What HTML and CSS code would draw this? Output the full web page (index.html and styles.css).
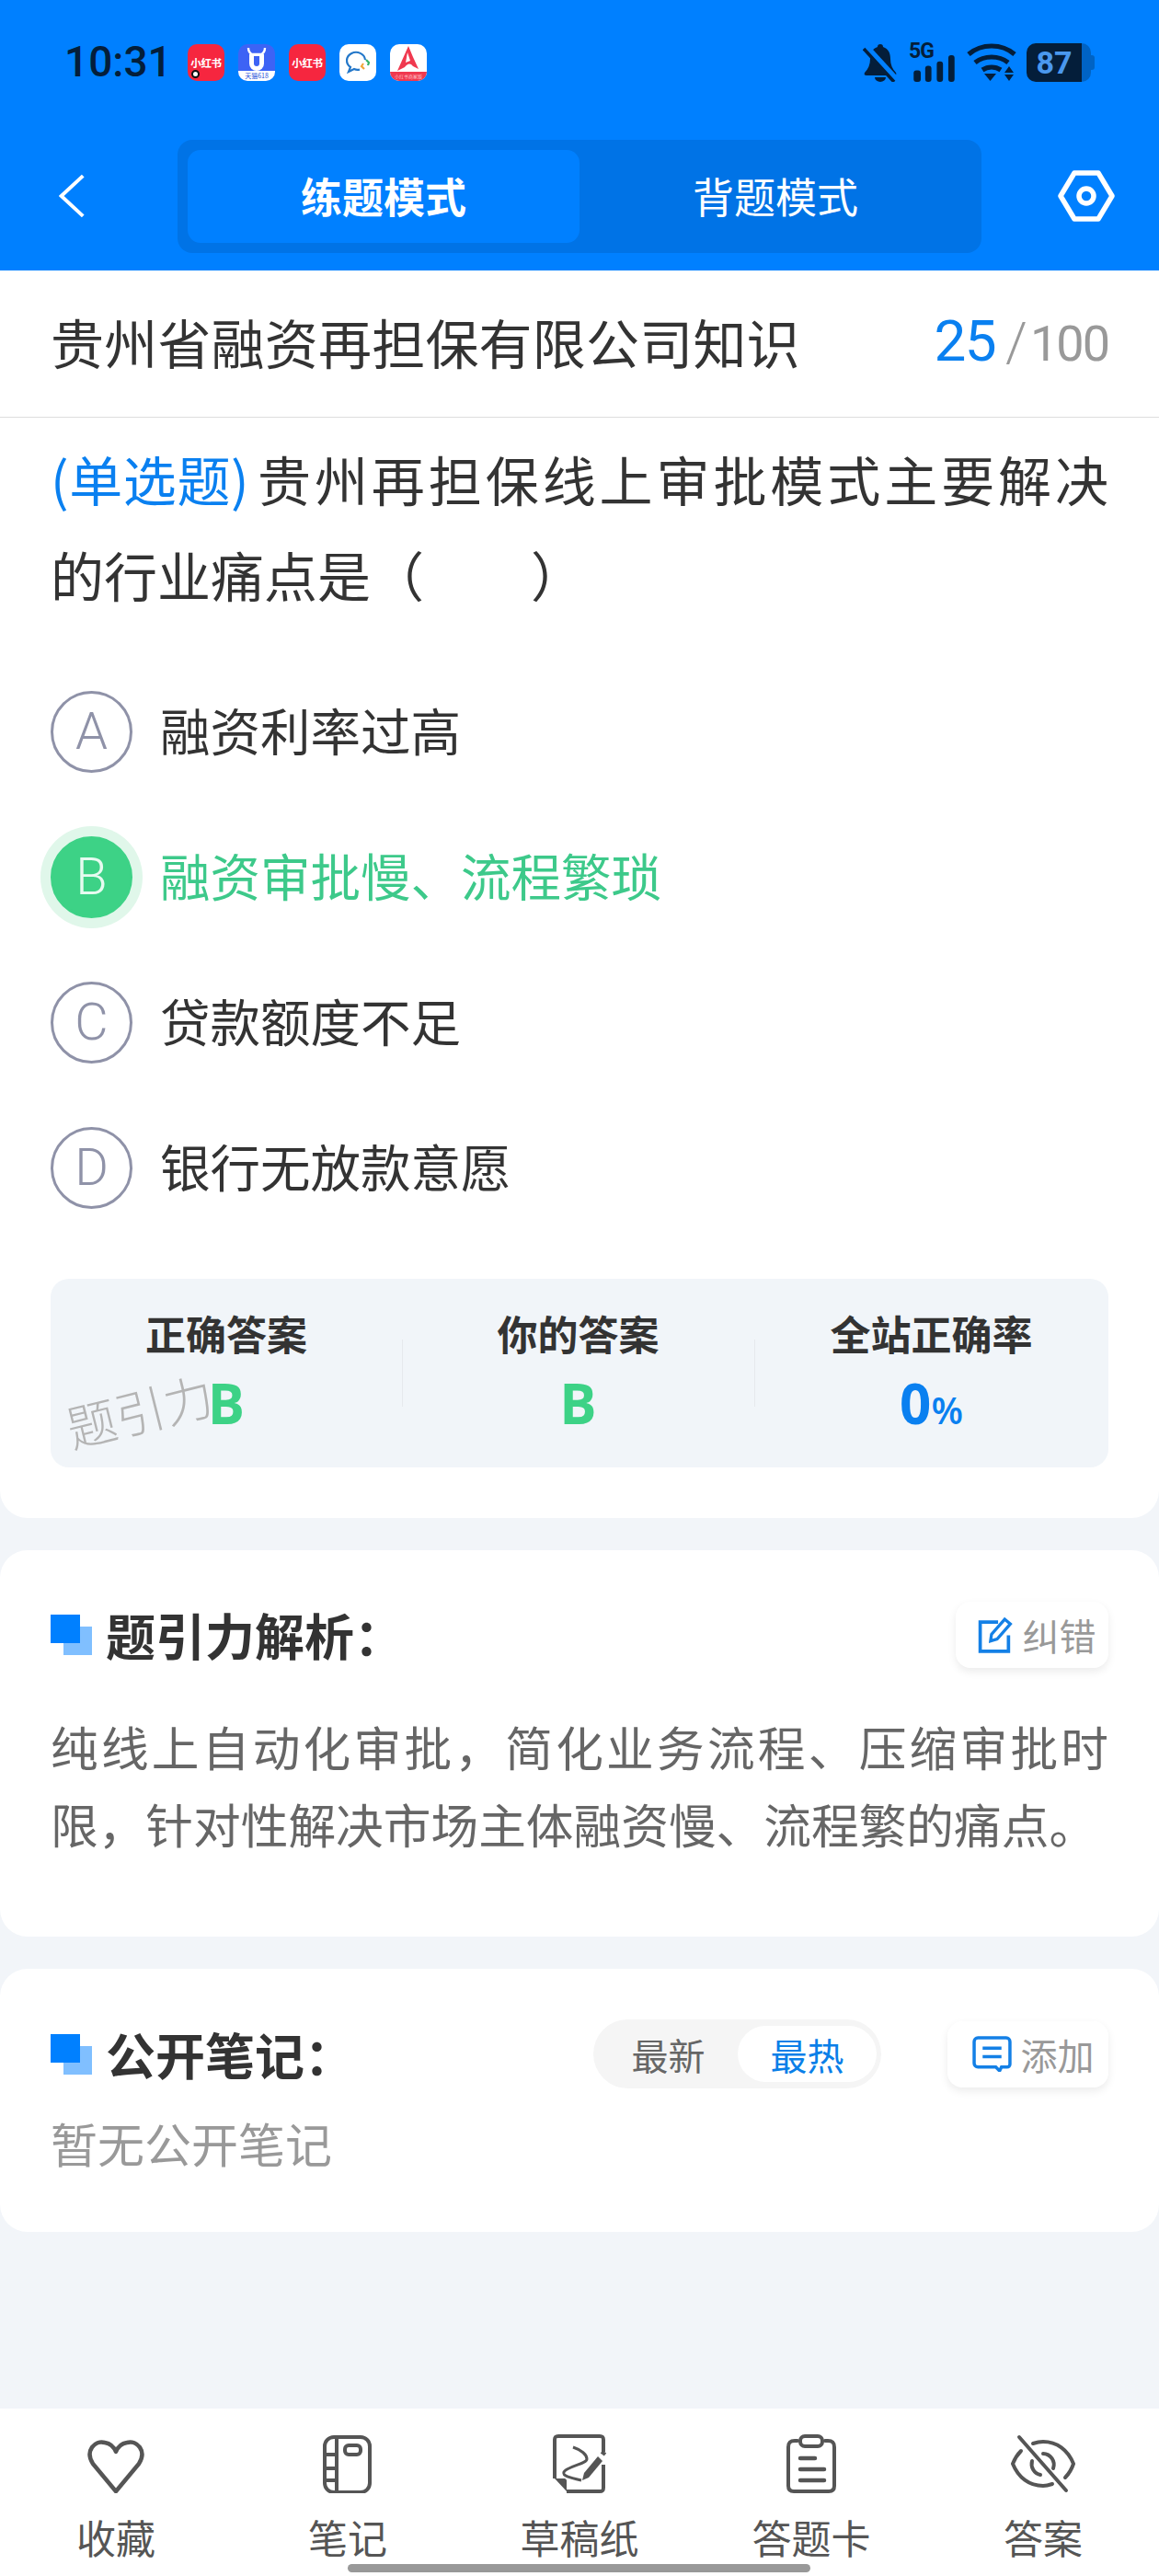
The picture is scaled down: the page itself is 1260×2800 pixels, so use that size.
FILE: index.html
```html
<!DOCTYPE html>
<html lang="zh-CN">
<head>
<meta charset="utf-8">
<title>练题模式</title>
<link rel="stylesheet" href="styles.css">
</head>
<body>
<div class="page">
  <header class="top">
    <div class="status">
      <span class="time">10:31</span>
      <div class="apps">
        <div class="app red"><span class="app-t">小红书</span><i class="rec"></i></div>
        <div class="app blue">
          <svg class="fill" viewBox="0 0 40 40"><path d="M11 4c0 4 2 6 4 7h10c2-1 4-3 4-7" fill="none" stroke="#fff" stroke-width="2.400"/><path d="M12 11h16v10a8 8 0 0 1-16 0z" fill="#fff"/><path d="M17 13h6v8a3 3 0 0 1-6 0z" fill="#3d63f5"/></svg>
          <span class="app-b">天猫618</span>
        </div>
        <div class="app red"><span class="app-t">小红书</span></div>
        <div class="app white">
          <svg class="fill" viewBox="0 0 40 40"><path d="M28 17a10 9 0 1 0-16 8l-2 5 6-3c2 1 4 1 6 .6" fill="none" stroke="#2377c9" stroke-width="2.200"/><path d="M29 17l3 3-1 3" fill="none" stroke="#33b36a" stroke-width="2.200"/><path d="M27 27l-3-3 2-3" fill="none" stroke="#f2a63a" stroke-width="2.200"/></svg>
        </div>
        <div class="app white">
          <svg class="fill" viewBox="0 0 40 40"><path d="M0 30h40v2a8 8 0 0 1-8 8H8a8 8 0 0 1-8-8z" fill="#f0394f"/><path d="M20 2l5 12 6 13-6-3c-3-4-6-3-9 1l-8 4z" fill="#f0394f"/><path d="M19 9l3 9-5 2z" fill="#fff"/></svg>
          <span class="app-c">小红书商家版</span>
        </div>
      </div>
      <div class="sys">
        <svg class="bell" viewBox="0 0 38 42"><path d="M19 1c2 0 3 1 3 3 6 2 8 7 8 13 0 6 2 11 6 15 1 2 0 3-2 3H4c-2 0-3-1-2-3 4-4 6-9 6-15 0-6 2-11 8-13 0-2 1-3 3-3z" fill="#041e3a"/><path d="M13 37h12a6 5 0 0 1-12 0z" fill="#041e3a"/><path d="M2 3l34 37" stroke="#0080ff" stroke-width="8"/><path d="M1 6l33 36" stroke="#041e3a" stroke-width="3.600"/></svg>
        <div class="net">
          <span class="g5">5G</span>
          <svg class="bars" viewBox="0 0 48 30"><rect x="1" y="17" width="8" height="13" rx="3"/><rect x="14" y="12" width="7" height="18" rx="3"/><rect x="27" y="7" width="7" height="23" rx="3"/><rect x="40" y="0" width="7" height="30" rx="3"/></svg>
        </div>
        <svg class="wifi" viewBox="0 0 54 42"><g fill="none" stroke="#041e3a" stroke-width="5.200"><path d="M2 12c14-12 36-12 50 0"/><path d="M9 21c10-8 26-8 36 0"/><path d="M17 29c6-4 14-4 20 0"/></g><path d="M19 33h13l-6.500 8z" fill="#041e3a"/><path d="M46 25l5 7H41zM41 34h10l-5 7z" fill="#041e3a"/></svg>
        <div class="battery">
          <div class="bat-on"><span class="bat-t">87</span></div>
          <div class="bat-off"></div>
          <i class="bat-cap"></i>
        </div>
      </div>
    </div>
    <nav class="bar">
      <svg class="back" viewBox="0 0 32 56"><path d="M30 3L3 28l27 25" fill="none" stroke="#fff" stroke-width="4.500"/></svg>
      <div class="tabs">
        <span class="tab on">练题模式</span>
        <span class="tab">背题模式</span>
      </div>
      <svg class="gear" viewBox="0 0 62 56"><path d="M18 3h26l15 25-15 25H18L3 28z" fill="none" stroke="#fff" stroke-width="5.500" stroke-linejoin="round"/><circle cx="31" cy="28" r="8" fill="none" stroke="#fff" stroke-width="5.500"/></svg>
    </nav>
  </header>

  <main class="main">
    <section class="card q-card">
      <div class="title-row">
        <h1 class="title">贵州省融资再担保有限公司知识</h1>
        <div class="count"><span class="cur">25</span><span class="slash">/</span><span class="total">100</span></div>
      </div>
      <div class="question">
        <p class="q1"><span class="qtype">(单选题)</span><span class="q-rest">贵州再担保线上审批模式主要解决</span></p>
        <p class="q2">的行业痛点是（　　）</p>
      </div>
      <div class="options">
        <div class="opt"><span class="letter">A</span><span class="opt-t">融资利率过高</span></div>
        <div class="opt ok"><span class="letter">B</span><span class="opt-t">融资审批慢、流程繁琐</span></div>
        <div class="opt"><span class="letter">C</span><span class="opt-t">贷款额度不足</span></div>
        <div class="opt"><span class="letter">D</span><span class="opt-t">银行无放款意愿</span></div>
      </div>
      <div class="stats">
        <div class="stat"><span class="s-l">正确答案</span><span class="s-v green">B</span></div>
        <div class="stat"><span class="s-l">你的答案</span><span class="s-v green">B</span></div>
        <div class="stat"><span class="s-l">全站正确率</span><span class="s-v blue-t">0<small class="pct">%</small></span></div>
        <span class="mark">题引力</span>
      </div>
    </section>

    <section class="card an-card">
      <div class="c-head">
        <h2 class="c-title"><i class="sq"></i>题引力解析：</h2>
        <div class="mini fix">
          <svg class="mini-i" viewBox="0 0 38 40"><path d="M22 6H3v31h30V20" fill="none" stroke="#1480e6" stroke-width="3.600"/><path d="M14 26l1-7L29 3l6 5-14 16z" fill="none" stroke="#1480e6" stroke-width="3.200"/></svg>
          <span class="mini-t">纠错</span>
        </div>
      </div>
      <p class="an-text">纯线上自动化审批，简化业务流程、压缩审批时限，针对性解决市场主体融资慢、流程繁的痛点。</p>
    </section>

    <section class="card note-card">
      <div class="c-head center">
        <h2 class="c-title"><i class="sq"></i>公开笔记：</h2>
        <div class="seg"><span class="seg-i">最新</span><span class="seg-i act">最热</span></div>
        <div class="mini add">
          <svg class="mini-i2" viewBox="0 0 42 38"><path d="M6 2h30a4 4 0 0 1 4 4v24a3 3 0 0 1-3 3h-6l-2 4-4-4H6a4 4 0 0 1-4-4V6a4 4 0 0 1 4-4z" fill="none" stroke="#1480e6" stroke-width="3.400"/><path d="M11 13h20M11 22h20" stroke="#1480e6" stroke-width="3.400"/></svg>
          <span class="mini-t">添加</span>
        </div>
      </div>
      <p class="empty">暂无公开笔记</p>
    </section>
  </main>

  <footer class="dock">
    <div class="dock-i">
      <svg class="d-ic" viewBox="0 0 72 64"><path d="M36 62L11 32C2 18 13 6 24 9c6 1 10 5 12 10 2-5 6-9 12-10 11-3 22 9 13 23z" fill="none" stroke="#555" stroke-width="4.500" stroke-linejoin="round"/></svg>
      <span class="d-t">收藏</span>
    </div>
    <div class="dock-i">
      <svg class="d-ic" viewBox="0 0 72 64"><g fill="none" stroke="#555" stroke-width="4"><rect x="11" y="3" width="49" height="60" rx="10"/><path d="M24 3v60M11 22h13M11 37h13M11 50h13"/><rect x="33" y="12" width="17" height="10" rx="4"/></g></svg>
      <span class="d-t">笔记</span>
    </div>
    <div class="dock-i">
      <svg class="d-ic" viewBox="0 0 72 64"><g fill="none" stroke="#555" stroke-width="4"><path d="M22 62h36c3 0 4-1 4-4V33M62 19V6c0-3-1-4-4-4H13c-3 0-4 1-4 4v42"/></g><path d="M9 48h11a3 3 0 0 1 2 2v12z" fill="#555"/><path d="M29 14c9 3 15 8 15 13s-22 8-25 14c-2 4 6 6 19 9" fill="none" stroke="#555" stroke-width="3"/><path d="M41 42l-2 8 7-3 15-18-5-5z" fill="#555"/><path d="M60 19l4 3" stroke="#555" stroke-width="4"/></svg>
      <span class="d-t">草稿纸</span>
    </div>
    <div class="dock-i">
      <svg class="d-ic" viewBox="0 0 72 64"><g fill="none" stroke="#555" stroke-width="4" stroke-linecap="round"><path d="M21 7h-3c-5 0-7 2-7 7v42c0 4 2 6 6 6h38c4 0 6-2 6-6V14c0-5-2-7-7-7h-3"/><rect x="24" y="2" width="24" height="11" rx="5"/></g><g fill="none" stroke="#555" stroke-width="4.500" stroke-linecap="round"><path d="M24 26h16M24 38h26M24 50h26"/></g></svg>
      <span class="d-t">答题卡</span>
    </div>
    <div class="dock-i">
      <svg class="d-ic" viewBox="0 0 72 64"><g fill="none" stroke="#555" stroke-width="4" stroke-linecap="round"><path d="M12 18c-4 4-7 9-9 14 6 15 18 24 33 24 4 0 7-1 10-2M25 10c3-1 7-2 11-2 15 0 27 9 33 24-2 6-5 11-9 15"/><path d="M36 21a12 12 0 0 1 11 16M33 44a12 12 0 0 1-9-15"/><path d="M10 3l51 58"/></g></svg>
      <span class="d-t">答案</span>
    </div>
  </footer>
  <i class="home"></i>
</div>
</body>
</html>
```
FILE: styles.css
```css
* { box-sizing: border-box; margin: 0; padding: 0; }
html, body { background: #f2f5f9; }
body { font-family: "Noto Sans CJK SC", "Noto Sans", sans-serif; color: #333; }
i { display: block; font-style: normal; }

.page { position: relative; width: 1260px; height: 2800px; display: flex; flex-direction: column; overflow: hidden; }

/* header */
.top { height: 294px; background: #0080ff; display: flex; flex-direction: column; flex: none; }
.status { height: 152px; display: flex; align-items: flex-start; padding: 47px 70px 0 70px; }
.time { font: 500 46px/40px Roboto, sans-serif; color: #041e3a; width: 134px; flex: none; }
.apps { display: flex; gap: 15px; padding-top: 1px; }
.app { position: relative; width: 40px; height: 40px; border-radius: 10px; overflow: hidden; display: flex; align-items: center; justify-content: center; }
.red { background: #f6263f; }
.blue { background: #3d63f5; }
.white { background: #fff; }
.app-t { font-size: 11.500px; font-weight: 700; color: #fff; line-height: 14px; white-space: nowrap; letter-spacing: -.4px; }
.rec { position: absolute; left: 4px; bottom: 3px; width: 9px; height: 9px; border-radius: 50%; background: #fff; border: 2.500px solid #111; }
.fill { position: absolute; inset: 0; width: 40px; height: 40px; }
.app-b { position: absolute; left: 0; right: 0; bottom: 0; height: 11px; background: #fff; color: #2a50d8; font-size: 7px; line-height: 11px; text-align: center; white-space: nowrap; }
.app-c { position: absolute; left: 0; right: 0; bottom: 1px; color: #ffc4cb; font-size: 5px; line-height: 8px; text-align: center; white-space: nowrap; }
.sys { margin-left: auto; display: flex; align-items: flex-start; }
.bell { width: 38px; height: 42px; flex: none; }
.net { position: relative; width: 50px; height: 42px; margin-left: 13px; flex: none; }
.g5 { position: absolute; left: -1px; top: -3px; font: 700 23px/24px Roboto, sans-serif; color: #041e3a; letter-spacing: -1px; }
.bars { position: absolute; left: 3px; bottom: 0; width: 47px; height: 29px; fill: #041e3a; }
.wifi { width: 54px; height: 42px; margin-left: 12px; flex: none; }
.battery { display: flex; align-items: center; margin-left: 11px; height: 42px; flex: none; }
.bat-on { width: 60px; height: 42px; background: #041e3a; border-radius: 10px 0 0 10px; display: flex; align-items: center; justify-content: center; }
.bat-t { font: 700 34px/42px Roboto, sans-serif; color: #4a98ee; }
.bat-off { width: 10px; height: 42px; background: #0063c4; border-radius: 0 10px 10px 0; }
.bat-cap { width: 4px; height: 16px; background: #0063c4; border-radius: 0 3px 3px 0; }

.bar { height: 142px; display: flex; align-items: flex-start; padding-left: 64px; position: relative; }
.back { width: 28px; height: 52px; margin-top: 35px; flex: none; }
.tabs { margin-left: 101px; width: 874px; height: 123px; background: #0073e6; border-radius: 16px; padding: 11px; display: flex; flex: none; }
.tab { flex: 1; display: flex; align-items: center; justify-content: center; font-size: 45px; color: #fff; border-radius: 14px; padding-bottom: 3px; }
.tab.on { background: #0080ff; font-weight: 700; }
.gear { width: 62px; height: 56px; margin: 33px 0 0 83px; flex: none; }

/* cards */
.main { flex: 1; display: flex; flex-direction: column; gap: 35px; }
.card { background: #fff; border-radius: 30px; }
.q-card { border-radius: 0 0 30px 30px; padding-bottom: 55px; }
.title-row { height: 160px; border-bottom: 1px solid #ddd; padding: 0 55px; display: flex; align-items: center; justify-content: space-between; }
.title { font-size: 58px; font-weight: 400; color: #333; line-height: 80px; letter-spacing: .2px; padding-bottom: 6px; }
.count { display: flex; align-items: baseline; color: #999; padding-bottom: 2px; }
.cur { font: 400 62px/80px Roboto, sans-serif; color: #0a80f0; letter-spacing: -1.500px; }
.slash { font: 300 60px/80px Roboto, sans-serif; margin: 0 3px 0 11px; color: #999; }
.total { font: 400 54px/80px Roboto, sans-serif; color: #999; letter-spacing: -2px; }
.question { margin-top: 14px; padding: 0 55px; font-size: 58px; line-height: 104px; color: #333; }
.q1 { white-space: nowrap; display: flex; justify-content: space-between; }
.qtype { color: #0a80f0; letter-spacing: .6px; flex: none; }
.q-rest { flex: none; width: 925px; text-align-last: justify; white-space: normal; }
.options { margin-top: 40px; padding-left: 55px; }
.opt { height: 158px; display: flex; align-items: center; }
.letter { width: 89px; height: 89px; border: 3px solid #8f92a8; border-radius: 50%; display: flex; align-items: center; justify-content: center; font: 300 56px/1 Roboto, sans-serif; color: #8f92a8; flex: none; }
.opt-t { margin-left: 30px; font-size: 54.500px; color: #333; line-height: 70px; white-space: nowrap; padding-bottom: 4px; }
.ok .letter { background: #3dd286; border-color: #3dd286; color: #e6fbf0; box-shadow: 0 0 0 11px #e0f7ea; }
.ok .opt-t { color: #3dc98a; }

.stats { position: relative; margin: 42px 55px 0; height: 205px; background: #f1f5f9; border-radius: 20px; display: grid; grid-template-columns: 382px 383px 385px; }
.stat { display: flex; flex-direction: column; align-items: center; padding-top: 29px; position: relative; }
.stat + .stat::before { content: ""; position: absolute; left: 0; top: 66px; height: 73px; width: 1px; background: #e6e9ed; }
.s-l { font-size: 44px; font-weight: 700; line-height: 60px; color: #333; }
.s-v { font: 700 60px/64px "Open Sans", sans-serif; margin-top: 14px; }
.green { color: #3dd286; }
.blue-t { color: #0a80f0; }
.pct { font-size: 40px; font-weight: 600; }
.mark { position: absolute; left: 18px; top: 132px; font-size: 54px; line-height: 60px; font-weight: 300; color: #b4b4b4; transform: rotate(-14deg); transform-origin: left center; white-space: nowrap; }

.an-card { padding: 56px 55px 81px 55px; }
.note-card { padding: 55px 55px 62px 55px; }
.c-head { display: flex; align-items: center; height: 72px; justify-content: space-between; }
.c-head.center { height: 75px; }
.c-title { position: relative; z-index: 0; padding-left: 60px; font-size: 54px; font-weight: 700; line-height: 72px; color: #333; white-space: nowrap; }
.sq { position: absolute; left: 0; top: 14px; width: 32px; height: 31px; background: #0080ff; }
.sq::before { content: ""; position: absolute; left: 14px; top: 13px; width: 31px; height: 31px; background: #80bfff; z-index: -1; }
.mini { width: 166px; height: 72px; background: #fff; border-radius: 16px; box-shadow: 0 4px 10px rgba(0,0,0,.08); display: flex; align-items: center; justify-content: center; gap: 10px; flex: none; }
.mini.fix { padding-left: 9px; }
.mini.add { width: 175px; margin-left: 72px; padding-left: 11px; }
.mini-i { width: 40px; height: 41px; }
.mini-i2 { width: 43px; height: 39px; }
.mini-t { font-size: 40px; line-height: 50px; color: #999; white-space: nowrap; }
.seg { margin-left: auto; width: 313px; height: 75px; border-radius: 38px; background: #f5f5f5; padding: 7px 5px 7px 6px; display: flex; flex: none; }
.seg-i { flex: 1; display: flex; align-items: center; justify-content: center; font-size: 40px; color: #666; border-radius: 31px; }
.seg-i.act { background: #fff; color: #0a7fe8; flex: 0 0 151px; }
.an-text { margin-top: 43px; font-size: 51.700px; line-height: 84px; color: #666; text-align: justify; }
.empty { margin-top: 24px; font-size: 51px; line-height: 70px; color: #999; }

/* dock */
.dock { height: 182px; flex: none; background: #fff; display: grid; grid-template-columns: repeat(5, 1fr); }
.dock-i { display: flex; flex-direction: column; align-items: center; padding-top: 28px; }
.d-ic { width: 72px; height: 64px; flex: none; }
.d-t { margin-top: 19px; font-size: 43px; line-height: 56px; color: #555; white-space: nowrap; }
.home { position: absolute; left: 378px; top: 2787px; width: 503px; height: 9px; border-radius: 5px; background: #999; }
```
